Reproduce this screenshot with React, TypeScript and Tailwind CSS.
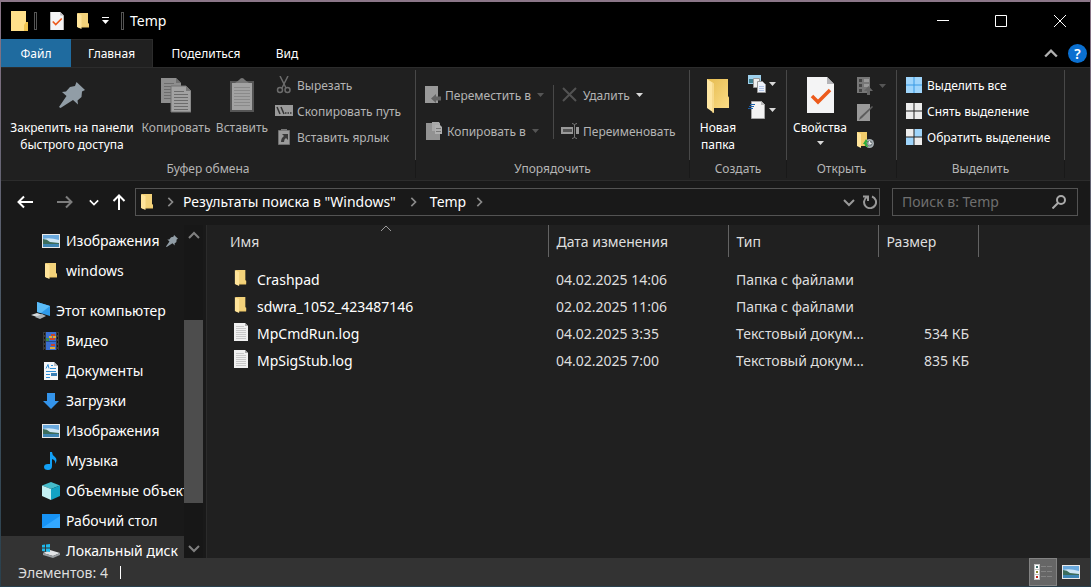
import React from 'react';

type IconProps = { className?: string };

const FolderIcon = ({ className = 'w-4 h-4' }: IconProps) => (
  <svg className={className} viewBox="0 0 16 18" preserveAspectRatio="none">
    <path d="M3 1h10v10.500l1 .5v3.500H3z" fill="#eec866" />
    <path d="M5 1h8v10.500h1v3H5z" fill="#f3d27a" />
    <path d="M2 1l4.500 2v14L2 15z" fill="#ffe49a" />
  </svg>
);

const BigFolderIcon = ({ className = 'w-6 h-9' }: IconProps) => (
  <svg className={className} viewBox="0 0 24 36">
    <defs>
      <linearGradient id="bf" x1="0" y1="0" x2="1" y2="1">
        <stop offset="0" stopColor="#e5bb50" />
        <stop offset="1" stopColor="#fbdc86" />
      </linearGradient>
    </defs>
    <path d="M1 1h21v17l1 1.500V30H1z" fill="url(#bf)" />
    <path d="M1 1l7 4.500v29.500L1 30z" fill="#fee6a2" />
    <path d="M7 5v30" stroke="#f0cd75" strokeWidth="1" />
  </svg>
);

const CheckDocIcon = ({ className = 'w-4 h-5' }: IconProps) => (
  <svg className={className} viewBox="0 0 27 36">
    <path d="M0 0h20l7 7v29H0z" fill="#f4f4f5" />
    <path d="M20 0l7 7h-7z" fill="#b4b4b8" />
    <path d="M5 19l6 6L23 13" fill="none" stroke="#ec5a1c" strokeWidth="3.500" />
  </svg>
);

const PinIcon = ({ className = 'w-[26px] h-[26px]' }: IconProps) => (
  <svg className={className} viewBox="0 0 26 26">
    <path d="M17.500 0L26 8l-3 1.500-.5 5.500-4 3.500.5 4-5-4.500L1.500 26 0 25l7.500-11L3 10l4-.5L11 5l5-1z" fill="#919da6" />
  </svg>
);

const CopyIcon = () => (
  <svg className="w-[30px] h-9" viewBox="0 0 30 36">
    <path d="M0 1h15l5 5v20H0z" fill="#8e8e8e" />
    <path d="M15 1v5h5" fill="#6f6f6f" />
    <path d="M3 6.500h10M3 9.500h13M3 12.500h13M3 15.500h13M3 18.500h13M3 21.500h13" stroke="#6c6c6c" />
    <path d="M10 9h15l5 5v21H10z" fill="#a2a2a2" stroke="#737373" />
    <path d="M25 9v5h5" fill="#777" />
    <path d="M13 14.500h10M13 17.500h14M13 20.500h14M13 23.500h14M13 26.500h14M13 29.500h14M13 32.500h14" stroke="#6c6c6c" />
  </svg>
);

const PasteIcon = () => (
  <svg className="w-6 h-9" viewBox="0 0 24 36">
    <path d="M0 4h24v31H0z" fill="#555" />
    <path d="M2 6h20v27H2z" fill="#a2a2a2" />
    <path d="M5 6l4-3q3-4 6 0l4 3z" fill="#777" />
    <path d="M4 10.500h16M4 13.500h16M4 16.500h16M4 19.500h16M4 22.500h16M4 25.500h16M4 28.500h16" stroke="#8a8a8a" />
  </svg>
);

const CutIcon = () => (
  <svg className="w-4 h-[18px]" viewBox="0 0 16 18" fill="none" stroke="#6c6c6c" strokeWidth="1.500">
    <path d="M4 0l6 12M12 0L6 12" />
    <circle cx="4" cy="14" r="2.500" />
    <circle cx="11.500" cy="14" r="2.500" />
  </svg>
);

const PathIcon = () => (
  <svg className="w-[18px] h-3" viewBox="0 0 18 12">
    <path d="M0 0h18v11H0z" fill="#9a9a9a" />
    <path d="M2 2l3 7M6 2l3 7" stroke="#333" strokeWidth="1.500" />
    <path d="M10 8h1.500M12.500 8H14M15 8h1.500" stroke="#333" strokeWidth="1.500" />
  </svg>
);

const PasteLinkIcon = () => (
  <svg className="w-4 h-[18px]" viewBox="0 0 16 18">
    <path d="M2.500 2.500h11v14h-11z" fill="#9a9a9a" stroke="#707070" />
    <path d="M5 1h6v2H5z" fill="#777" />
    <path d="M6 6h6v6l-2-2q-2 1-2 4H5q0-4 3-6z" fill="#3a3a3a" />
  </svg>
);

const MoveToIcon = () => (
  <svg className="w-4 h-[18px]" viewBox="0 0 16 18">
    <path d="M0 0h13v17H0z" fill="#999" />
    <path d="M6 12.500l5-4.500v2.500h5v4h-5V17z" fill="#636363" />
  </svg>
);

const CopyToIcon = () => (
  <svg className="w-4 h-[18px]" viewBox="0 0 16 18">
    <path d="M0 1h14v17H0z" fill="#929292" />
    <path d="M6 0h7l1 2v7H6z" fill="#a9a9a9" />
    <path d="M9 3h5l2 2v7H9z" fill="#b0b0b0" />
    <path d="M10 6.500h5M10 9.500h5" stroke="#777" />
  </svg>
);

const DeleteIcon = () => (
  <svg className="w-4 h-4" viewBox="0 0 16 16">
    <path d="M1 1l13 13M14 1L1 14" stroke="#525252" strokeWidth="2" />
  </svg>
);

const RenameIcon = () => (
  <svg className="w-[18px] h-4" viewBox="0 0 18 16">
    <path d="M0 4h12v7H0zM15 4h3v7h-3z" fill="#999" />
    <path d="M2 6h9v3H2z" fill="#555" />
    <path d="M11 .5q2 0 2.500 1.500Q14 .5 16 .5M11 15.500q2 0 2.500-1.500.5 1.500 2.500 1.500M13.500 2v12" stroke="#777" fill="none" />
  </svg>
);

const NewItemIcon = () => (
  <svg className="w-[18px] h-[18px]" viewBox="0 0 18 18">
    <path d="M0 0h13v9H0z" fill="#9dd0ec" />
    <path d="M1 4h4v4H1z" fill="#3f7f8e" />
    <path d="M5.500 3.500h6v9h-6z" fill="#eee" stroke="#999" />
    <path d="M9.500 6.500h5l3 3v8h-8z" fill="#eef3fb" stroke="#999" />
    <path d="M11 11.500h5M11 13.500h5M11 15.500h5" stroke="#b3c6ea" />
  </svg>
);

const EasyAccessIcon = () => (
  <svg className="w-[18px] h-[18px]" viewBox="0 0 18 18">
    <path d="M3.500.5h10l3 3v14h-13z" fill="#f3f3f3" stroke="#a5a5a5" />
    <path d="M13 0v4h4" fill="#bbb" />
    <path d="M2 3.500h5M1 5.500h5M0 7.500h5" stroke="#1a5fa8" />
  </svg>
);

const OpenIcon = () => (
  <svg className="w-4 h-[18px]" viewBox="0 0 16 18">
    <path d="M0 0h13v16H0z" fill="#777" />
    <path d="M2 2h3v3H2zM2 7h3v3H2zM2 12h3v3H2z" fill="#444" />
    <path d="M7 2h5v3H7zM7 7h5v3H7z" fill="#999" />
    <path d="M11.500 9l4.500 5h-3v4h-3v-4H7z" fill="#666" />
  </svg>
);

const EditIcon = () => (
  <svg className="w-4 h-[18px]" viewBox="0 0 16 18">
    <path d="M0 0h13v17H0z" fill="#999" />
    <path d="M15 2l1 1L5 14l-3 2 1-3z" fill="#5c5c5c" />
  </svg>
);

const HistoryIcon = () => (
  <svg className="w-[18px] h-[18px]" viewBox="0 0 18 18">
    <path d="M0 1h10v14H0z" fill="#f2cc6a" />
    <path d="M0 1l4 2v14l-4-2z" fill="#ffe49a" />
    <circle cx="12.500" cy="12.500" r="4.500" fill="#a9b1b5" />
    <circle cx="12.500" cy="12.500" r="2.500" fill="none" stroke="#6f777b" />
    <path d="M12.500 10v2.500h2" stroke="#eee" fill="none" />
    <path d="M6 13l3-5 2 3H9.500q0 3 2 5Q7.500 16 7.500 13z" fill="#2fae3c" />
  </svg>
);

const SelectIcon = ({ cells, gap }: { cells: string[]; gap?: string }) => (
  <svg className="w-4 h-4" viewBox="0 0 16 16">
    {gap && <path d="M0 0h16v16H0z" fill={gap} />}
    <path d="M0 0h7.500v7.500H0z" fill={cells[0]} />
    <path d="M8.500 0H16v7.500H8.500z" fill={cells[1]} />
    <path d="M0 8.500h7.500V16H0z" fill={cells[2]} />
    <path d="M8.500 8.500H16V16H8.500z" fill={cells[3]} />
  </svg>
);

const PictureIcon = () => (
  <svg className="w-[18px] h-3.5" viewBox="0 0 18 14">
    <path d="M0 0h18v14H0z" fill="#e9e9e9" />
    <path d="M1 1h16v12H1z" fill="#6aa9dd" />
    <path d="M1 5q6-2 16 1v3H1z" fill="#cfe6f5" />
    <path d="M1 5q4 0 7 3l9 1v1H1z" fill="#3d6d5c" />
    <path d="M1 10h16v3H1z" fill="#3f86b4" />
  </svg>
);

const ComputerIcon = () => (
  <svg className="w-5 h-[18px]" viewBox="0 0 20 18">
    <path d="M6 0l13 4v10L6 10z" fill="#2f9bea" />
    <path d="M6 0l13 4-9 7-4-1z" fill="#5bbcf8" />
    <path d="M0 13l6-2 6 2-6 2z" fill="#d4dadd" />
    <path d="M4 15l7-3 4 2-6 3z" fill="#aab2b7" />
  </svg>
);

const VideoIcon = () => (
  <svg className="w-4 h-[18px]" viewBox="0 0 16 18">
    <path d="M0 0h16v18H0z" fill="#3a3a3a" />
    <path d="M3 0h10v18H3z" fill="#3b6fd0" />
    <path d="M1.500 1v17M14.500 1v17" stroke="#111" strokeDasharray="2 2" />
    <path d="M8 2h4v2H8zM7 6h5v2H7zM8 12h4v2H8z" fill="#c8452a" />
    <path d="M6 4h3v2H6zM10 4h3v2h-3zM7 15h5v2H7z" fill="#e2ad35" />
    <path d="M3 6h3v3H3z" fill="#3c8a4a" />
    <path d="M3 9h10v1H3z" fill="#244b8d" />
  </svg>
);

const DocumentsIcon = () => (
  <svg className="w-4 h-[18px]" viewBox="0 0 16 18">
    <path d="M1 0h10l4 4v14H1z" fill="#f4f6f8" />
    <path d="M11 0v4h4z" fill="#b8bec4" />
    <path d="M3 6.500l2-4 1 4M8 3.500h2M7 6.500h6M3 9.500h10M3 12.500h4M3 15.500h4" stroke="#2f8fd8" fill="none" />
    <path d="M8 11h6v3H8z" fill="#3a7fb5" />
  </svg>
);

const DownloadIcon = () => (
  <svg className="w-4 h-4" viewBox="0 0 16 16">
    <path d="M4 0h8v8h4l-8 8-8-8h4z" fill="#3494ea" />
  </svg>
);

const MusicIcon = () => (
  <svg className="w-3.5 h-[18px]" viewBox="0 0 14 18">
    <path d="M6 0h2q0 3 3 5 3 3 0 7 1-4-3-5v7q0 4-4 4-4 0-4-3 0-3 4-3h2z" fill="#12a0f5" />
  </svg>
);

const CubeIcon = () => (
  <svg className="w-[18px] h-[18px]" viewBox="0 0 18 18">
    <path d="M9 0l9 3.500L9 7 0 3.500z" fill="#45bccb" />
    <path d="M0 3.500L9 7v11l-9-4z" fill="#c3f0f3" />
    <path d="M18 3.500L9 7v11l9-4z" fill="#13a3c4" />
  </svg>
);

const DesktopIcon = () => (
  <svg className="w-[18px] h-3.5" viewBox="0 0 18 14">
    <path d="M0 0h18v14H0z" fill="#1793f5" />
    <path d="M0 14L18 2v12z" fill="#33a7ff" />
  </svg>
);

const DiskIcon = () => (
  <svg className="w-[18px] h-3.5" viewBox="0 0 18 14">
    <path d="M1 9l7-3 10 3-7 3z" fill="#e2e4e6" />
    <path d="M1 9l10 3v2L1 11zM18 9l-7 3v2l7-3z" fill="#9a9fa3" />
    <path d="M0 1l3-.5v3H0zM4 .4L8 0v3.500H4zM0 4.500h3v3L0 7zM4 4.500h4V8l-4-.5z" fill="#1fb8ea" />
  </svg>
);

const TextFileIcon = () => (
  <svg className="w-3.5 h-[18px]" viewBox="0 0 14 18">
    <path d="M0 0h11l3 3v15H0z" fill="#f1f1f1" />
    <path d="M11 0v3h3z" fill="#a9a9a9" />
    <path d="M2 3.500h8M2 5.500h10M2 7.500h10M2 9.500h10M2 11.500h10M2 13.500h10M2 15.500h10" stroke="#c9c9c9" />
  </svg>
);

const Chevron = ({ d, className, width = 2 }: { d: string; className: string; width?: number }) => (
  <svg className={className} viewBox="0 0 12 12" fill="none" stroke="currentColor" strokeWidth={width}>
    <path d={d} />
  </svg>
);

const UP = 'M1 9l5-5 5 5';
const DOWN = 'M1 4l5 5 5-5';
const RIGHT = 'M4 1l5 5-5 5';

const Caret = ({ className = 'text-[#d8d8d8]' }: IconProps) => (
  <svg className={`w-[7px] h-1 shrink-0 ${className}`} viewBox="0 0 7 4">
    <path d="M0 0h7L3.500 4z" fill="currentColor" />
  </svg>
);

const Group = ({ label, className, children }: { label: string; className: string; children: React.ReactNode }) => (
  <section className={`flex flex-col shrink-0 pt-[2px] ${className}`}>
    <div className="flex h-[90px] border-r border-[#484848]">{children}</div>
    <div className="h-[18px] border-r border-[#191919] text-center leading-[18px] text-[#b5b5b5]">{label}</div>
  </section>
);

const SmallButton = ({ icon, label, caret }: { icon: React.ReactNode; label: string; caret?: React.ReactNode }) => (
  <button className="flex items-center gap-1 h-[26px] whitespace-nowrap">
    <span className="flex w-[18px] justify-center">{icon}</span>
    <span>{label}</span>
    {caret && <span className="ml-[2px]">{caret}</span>}
  </button>
);

const BLUE = '#9fd5fb';
const WHITE = '#ececec';

const Ribbon = () => (
  <div className="flex h-[114px] shrink-0 overflow-hidden border-y border-[#2c2c2c] bg-[#202020] text-xs leading-[17px]">
    <Group label="Буфер обмена" className="w-[415px]">
      <button className="flex flex-col items-center w-[126px] ml-2 pt-3 text-white whitespace-nowrap">
        <span className="h-[37px]"><PinIcon /></span>
        <span className="leading-[17px]">Закрепить на панели<br />быстрого доступа</span>
      </button>
      <button className="flex flex-col items-center w-[74px] ml-1 pt-[7px] text-[#b4b4b4]">
        <span className="h-[42px]"><CopyIcon /></span>
        Копировать
      </button>
      <button className="flex flex-col items-center w-[54px] ml-[2px] pt-[7px] text-[#b4b4b4]">
        <span className="h-[42px]"><PasteIcon /></span>
        Вставить
      </button>
      <div className="flex flex-col ml-1.5 pt-[2px] text-[#b4b4b4]">
        <SmallButton icon={<CutIcon />} label="Вырезать" />
        <SmallButton icon={<PathIcon />} label="Скопировать путь" />
        <SmallButton icon={<PasteLinkIcon />} label="Вставить ярлык" />
      </div>
    </Group>
    <Group label="Упорядочить" className="w-[274px]">
      <div className="flex flex-col gap-[10px] w-[128px] pl-[9px] pt-3 text-[#b4b4b4]">
        <SmallButton icon={<MoveToIcon />} label="Переместить в" caret={<Caret className="text-[#555]" />} />
        <SmallButton icon={<CopyToIcon />} label="Копировать в" caret={<Caret className="text-[#555]" />} />
      </div>
      <div className="w-px h-[54px] ml-[9px] mt-[15px] bg-[#484848]" />
      <div className="flex flex-col gap-[10px] pl-[7px] pt-3 text-[#b4b4b4]">
        <SmallButton icon={<DeleteIcon />} label="Удалить" caret={<Caret />} />
        <SmallButton icon={<RenameIcon />} label="Переименовать" />
      </div>
    </Group>
    <Group label="Создать" className="w-[97px]">
      <button className="flex flex-col items-center w-[50px] ml-[3px] pt-2 text-white">
        <span className="h-[41px]"><BigFolderIcon /></span>
        Новая папка
      </button>
      <div className="flex flex-col gap-2 ml-[5px] pt-[5px]">
        <button aria-label="Создать элемент" className="flex items-center gap-[3px]"><NewItemIcon /><Caret /></button>
        <button aria-label="Простой доступ" className="flex items-center gap-[3px]"><EasyAccessIcon /><Caret /></button>
      </div>
    </Group>
    <Group label="Открыть" className="w-[110px]">
      <button className="flex flex-col items-center w-[60px] ml-[3px] pt-[7px] text-white">
        <span className="h-[42px]"><CheckDocIcon className="w-[27px] h-9" /></span>
        Свойства
        <span className="flex mt-[5px]"><Caret /></span>
      </button>
      <div className="flex flex-col gap-[9px] ml-[7px] pt-[7px]">
        <button aria-label="Открыть" className="flex items-center gap-1.5"><OpenIcon /><Caret className="text-[#555]" /></button>
        <button aria-label="Изменить"><EditIcon /></button>
        <button aria-label="Журнал"><HistoryIcon /></button>
      </div>
    </Group>
    <Group label="Выделить" className="w-[168px]">
      <div className="flex flex-col pl-2 pt-[2px] text-white">
        <SmallButton icon={<SelectIcon cells={[BLUE, BLUE, BLUE, BLUE]} gap="#3a9be6" />} label="Выделить все" />
        <SmallButton icon={<SelectIcon cells={[WHITE, WHITE, WHITE, WHITE]} />} label="Снять выделение" />
        <SmallButton icon={<SelectIcon cells={[WHITE, BLUE, BLUE, WHITE]} />} label="Обратить выделение" />
      </div>
    </Group>
  </div>
);

const TitleBar = () => (
  <header className="flex h-[37px] shrink-0 items-center pl-[10px] text-white">
    <svg className="w-[18px] h-5" viewBox="0 0 18 20">
      <path d="M0 0h15v11l2 1v8H0z" fill="#ffe08a" />
      <path d="M15 11h2v9h-4v-6z" fill="#efc34f" />
    </svg>
    <div className="w-[3px] h-[18px] ml-[5px] border border-[#555]" />
    <button aria-label="Свойства" className="ml-[13px]"><CheckDocIcon className="w-[14px] h-[18px]" /></button>
    <button aria-label="Новая папка" className="ml-[11px]"><FolderIcon className="w-4 h-[18px]" /></button>
    <button aria-label="Настройка панели" className="ml-[11px]">
      <svg className="w-[7px] h-2" viewBox="0 0 7 8" fill="#fff"><path d="M0 0h7v1H0zM0 3h7L3.500 7z" /></svg>
    </button>
    <div className="w-[3px] h-[18px] ml-3 border border-[#555]" />
    <h1 className="ml-1.5 text-sm leading-5">Temp</h1>
    <div className="ml-auto flex">
      <button aria-label="Свернуть" className="flex w-[58px] justify-center"><svg className="w-3 h-3" viewBox="0 0 12 12" stroke="#fff"><path d="M0 5.500h12" /></svg></button>
      <button aria-label="Развернуть" className="flex w-[58px] justify-center"><svg className="w-3 h-3" viewBox="0 0 12 12" stroke="#fff" fill="none"><path d="M.5.5h11v11H.5z" /></svg></button>
      <button aria-label="Закрыть" className="flex w-[60px] justify-center"><svg className="w-3 h-3" viewBox="0 0 12 12" stroke="#fff"><path d="M0 0l12 12M12 0L0 12" /></svg></button>
    </div>
  </header>
);

const Tabs = () => (
  <nav className="flex h-7 shrink-0 text-xs leading-[17px] text-white">
    <button className="w-[70px] bg-[#1f6b9f]">Файл</button>
    <button className="w-[82px] border-r border-t border-[#2c2c2c] bg-[#202020]">Главная</button>
    <button className="w-[106px]">Поделиться</button>
    <button className="w-14">Вид</button>
    <div className="ml-auto flex items-center gap-[10px] pr-[3px]">
      <button aria-label="Свернуть ленту"><Chevron d={UP} className="w-[14px] h-[14px] text-[#b0b0b0]" /></button>
      <button aria-label="Справка" className="w-[19px] h-[19px] rounded-full bg-[#0a6fd0] text-sm font-semibold">?</button>
    </div>
  </nav>
);

const Arrow = ({ d, className }: { d: string; className: string }) => (
  <svg className={`w-4 h-4 ${className}`} viewBox="0 0 16 16" fill="none" stroke="currentColor" strokeWidth="2">
    <path d={d} />
  </svg>
);

const AddressBar = () => (
  <div className="flex h-11 shrink-0 items-center pl-4 pr-3 pb-[2px] text-sm">
    <button aria-label="Назад"><Arrow d="M16 8H1M7 2.500L1.500 8 7 13.500" className="text-white" /></button>
    <button aria-label="Вперед" className="ml-6"><Arrow d="M0 8h15M9 2.500L14.500 8 9 13.500" className="text-[#7d7d7d]" /></button>
    <button aria-label="Последние расположения" className="ml-4"><Chevron d={DOWN} className="w-[10px] h-[10px] text-white" /></button>
    <button aria-label="Вверх" className="ml-3"><Arrow d="M8 16V1M2.500 7L8 1.500 13.500 7" className="text-white" /></button>
    <div className="flex flex-1 h-7 ml-2 items-center border border-[#535353] pl-[3px] text-white">
      <FolderIcon className="w-4 h-[18px]" />
      <Chevron d={RIGHT} className="w-[10px] h-[10px] ml-[10px] text-[#8a8a8a]" />
      <a href="#search" className="ml-2">Результаты поиска в "Windows"</a>
      <Chevron d={RIGHT} className="w-[10px] h-[10px] ml-3 text-[#8a8a8a]" />
      <a href="#temp" className="ml-3">Temp</a>
      <Chevron d={RIGHT} className="w-[10px] h-[10px] ml-2 text-[#8a8a8a]" />
      <button aria-label="Предыдущие расположения" className="ml-auto"><Chevron d={DOWN} className="w-3 h-3 text-[#999]" /></button>
      <button aria-label="Обновить" className="ml-2 mr-[2px]">
        <svg className="w-[14px] h-[14px]" viewBox="0 0 14 14" fill="none" stroke="#999" strokeWidth="2">
          <path d="M9 1.500A6 6 0 1 1 4 2M0 1.500h5V6" />
        </svg>
      </button>
    </div>
    <div className="flex w-[186px] h-7 ml-3 items-center border border-[#535353] pl-[9px] pr-[11px]">
      <input aria-label="Поиск" placeholder="Поиск в: Temp" className="flex-1 min-w-0 bg-transparent outline-none placeholder:text-[#6f6f6f]" />
      <svg className="w-[14px] h-[14px]" viewBox="0 0 14 14" fill="none" stroke="#aaa" strokeWidth="2">
        <circle cx="9" cy="5" r="4" />
        <path d="M6 8l-5.500 5.500" />
      </svg>
    </div>
  </div>
);

const places = [
  { icon: <VideoIcon />, label: 'Видео' },
  { icon: <DocumentsIcon />, label: 'Документы' },
  { icon: <DownloadIcon />, label: 'Загрузки' },
  { icon: <PictureIcon />, label: 'Изображения' },
  { icon: <MusicIcon />, label: 'Музыка' },
  { icon: <CubeIcon />, label: 'Объемные объекты' },
  { icon: <DesktopIcon />, label: 'Рабочий стол' },
  { icon: <DiskIcon />, label: 'Локальный диск', active: true },
];

const Place = ({ icon, label, active, pinned }: { icon: React.ReactNode; label: string; active?: boolean; pinned?: boolean }) => (
  <a href="#place" className={`flex h-[30px] shrink-0 items-center gap-1.5 pl-[41px] whitespace-nowrap ${active ? 'bg-[#333]' : ''}`}>
    <span className="flex w-[18px] shrink-0 justify-center">{icon}</span>
    {label}
    {pinned && <PinIcon className="w-3 h-3" />}
  </a>
);

const Sidebar = () => (
  <aside className="flex w-[206px] shrink-0 border-r border-[#2b2b2b] text-sm text-white">
    <div className="flex flex-1 min-w-0 flex-col overflow-hidden pt-px">
      <Place icon={<PictureIcon />} label="Изображения" pinned />
      <Place icon={<FolderIcon className="w-4 h-[18px]" />} label="windows" />
      <a href="#computer" className="flex h-[30px] shrink-0 mt-[10px] items-center gap-[5px] pl-[30px]">
        <ComputerIcon />
        Этот компьютер
      </a>
      {places.map((p) => <Place key={p.label} {...p} />)}
    </div>
    <div className="flex w-[19px] mr-[3px] flex-col items-center bg-[#171717] pt-1 text-[#808080]">
      <Chevron d={UP} className="w-3 h-3 shrink-0" />
      <div className="w-[19px] h-[183px] mt-[79px] bg-[#4d4d4d]" />
      <Chevron d={DOWN} className="w-3 h-3 mt-auto mb-1 shrink-0" />
    </div>
  </aside>
);

const files = [
  { name: 'Crashpad', date: '04.02.2025 14:06', type: 'Папка с файлами', size: '', folder: true },
  { name: 'sdwra_1052_423487146', date: '02.02.2025 11:06', type: 'Папка с файлами', size: '', folder: true },
  { name: 'MpCmdRun.log', date: '04.02.2025 3:35', type: 'Текстовый документ', size: '534 КБ', folder: false },
  { name: 'MpSigStub.log', date: '04.02.2025 7:00', type: 'Текстовый документ', size: '835 КБ', folder: false },
];

const FileList = () => (
  <main className="flex-1 min-w-0 bg-[#202020]">
    <table className="w-full table-fixed text-sm text-[#dedede]">
      <colgroup>
        <col className="w-[341px]" />
        <col className="w-[180px]" />
        <col className="w-[150px]" />
        <col className="w-[100px]" />
        <col />
      </colgroup>
      <thead>
        <tr className="h-8 text-left">
          <th className="relative border-r border-[#636363] pl-[23px] pt-px font-normal">
            Имя
            <Chevron d={UP} width={1} className="absolute -top-[3px] left-[173px] w-3 h-3 text-[#999]" />
          </th>
          <th className="border-r border-[#636363] pl-2 pt-px font-normal">Дата изменения</th>
          <th className="border-r border-[#636363] pl-2 pt-px font-normal">Тип</th>
          <th className="border-r border-[#636363] pl-2 pt-px font-normal">Размер</th>
          <th />
        </tr>
      </thead>
      <tbody>
        <tr className="h-[9px]"><td colSpan={5} /></tr>
        {files.map((f) => (
          <tr key={f.name} className="h-[27px]">
            <td className="pl-[26px]">
              <span className="flex items-center gap-[9px] text-white">
                <span className="flex w-[15px] -mt-1 justify-center">
                  {f.folder ? <FolderIcon className="w-[15px] h-[18px]" /> : <TextFileIcon />}
                </span>
                {f.name}
              </span>
            </td>
            <td className="pl-2">{f.date}</td>
            <td className="pl-2 pr-3 truncate">{f.type}</td>
            <td className="pr-[9px] text-right">{f.size}</td>
            <td />
          </tr>
        ))}
      </tbody>
    </table>
  </main>
);

const StatusBar = () => (
  <footer className="flex h-7 shrink-0 items-center bg-[#333] pl-[17px] pr-[10px] text-sm text-[#dedede]">
    <span className="pt-px">Элементов: 4</span>
    <div className="w-px h-[13px] ml-3 bg-white" />
    <button aria-label="Таблица" className="flex ml-auto w-7 h-7 items-center justify-center border border-[#838383] bg-[#666]">
      <svg className="w-[18px] h-4" viewBox="0 0 18 16">
        <path d="M0 0h6v16H0z" fill="#c4c4c4" />
        <path d="M1 1h4v4H1zM1 6h4v4H1zM1 11h4v4H1z" fill="#fff" />
        <path d="M2 2h2v2H2z" fill="#3d6d6c" />
        <path d="M2 7h2v2H2z" fill="#8a8a30" />
        <path d="M2 12h2v2H2z" fill="#c0281c" />
        <path d="M7 2.500h5M13 2.500h5M7 7.500h5M13 7.500h5M7 12.500h5M13 12.500h5" stroke="#838383" />
      </svg>
    </button>
    <button aria-label="Крупные значки" className="ml-[5px]"><PictureIcon /></button>
  </footer>
);

const App: React.FC = () => {
  return (
    <div className="h-screen bg-linear-to-b from-[#8b7688] via-[#4b5866] to-[#29404d] pt-[2px] pl-px pr-px pb-px font-['Noto_Sans',sans-serif]">
      <div className="flex h-full flex-col overflow-hidden bg-black">
        <TitleBar />
        <Tabs />
        <Ribbon />
        <div className="flex flex-1 min-h-0 flex-col bg-[#191919]">
          <AddressBar />
          <div className="flex flex-1 min-h-0">
            <Sidebar />
            <FileList />
          </div>
        </div>
        <StatusBar />
      </div>
    </div>
  );
};

export default App;
